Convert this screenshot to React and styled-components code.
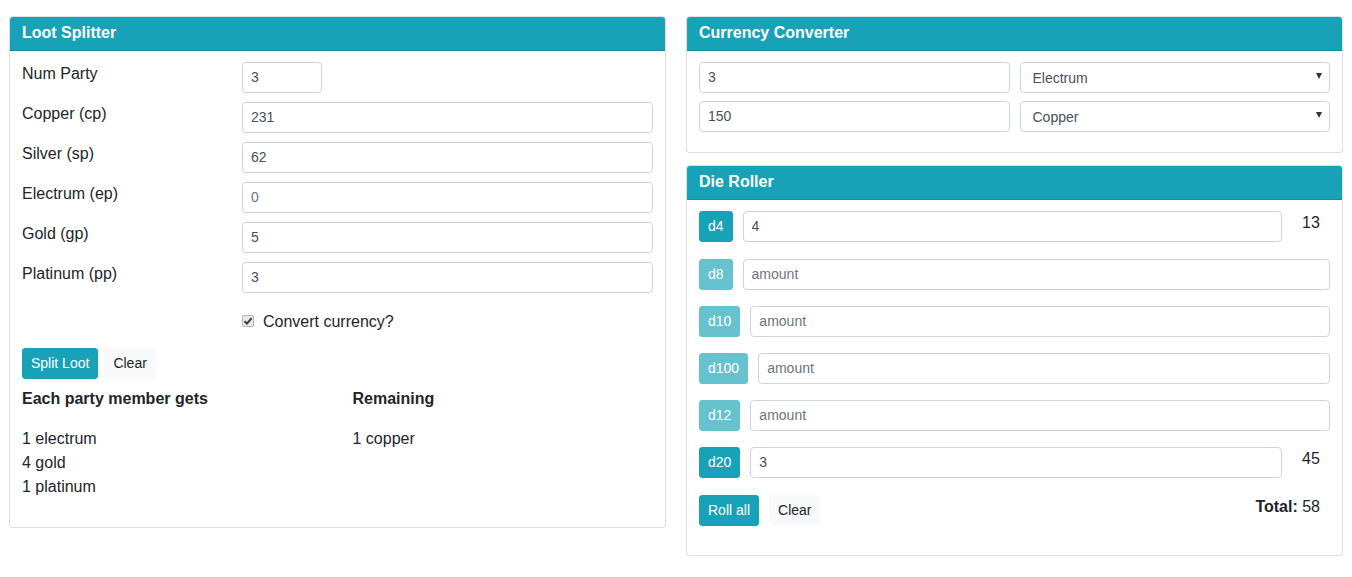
import React from "react";
import styled, { createGlobalStyle, css } from "styled-components";

const GlobalStyle = createGlobalStyle`
  * {
    box-sizing: border-box;
  }
  body {
    margin: 0;
    background: #fff;
    font-family: "Liberation Sans", Arial, Helvetica, sans-serif;
    font-size: 16px;
    line-height: 24px;
    color: #212529;
  }
`;

const dice = [
  { name: "d4", value: "4", result: "13", active: true },
  { name: "d8", value: "" },
  { name: "d10", value: "" },
  { name: "d100", value: "" },
  { name: "d12", value: "" },
  { name: "d20", value: "3", result: "45", active: true },
];

const lootFields = [
  { label: "Num Party", value: "3", narrow: true },
  { label: "Copper (cp)", value: "231" },
  { label: "Silver (sp)", value: "62" },
  { label: "Electrum (ep)", placeholder: "0" },
  { label: "Gold (gp)", value: "5" },
  { label: "Platinum (pp)", value: "3" },
];

const coins = ["Copper", "Silver", "Electrum", "Gold", "Platinum"];

const App = () => {
  return (
    <Page>
      <GlobalStyle />
      <Column>
        <Card>
          <CardHeader>Loot Splitter</CardHeader>
          <CardBody $bottom={12}>
            {lootFields.map((f) => (
              <FormRow key={f.label}>
                <FieldLabel>{f.label}</FieldLabel>
                <Input
                  $narrow={f.narrow}
                  defaultValue={f.value}
                  placeholder={f.placeholder}
                />
              </FormRow>
            ))}
            <CheckRow>
              <span />
              <CheckLabel>
                <CheckBox>
                  <svg width="10" height="10" viewBox="0 0 10 10">
                    <path
                      d="M1.5 5.2 L4 7.6 L8.6 2.2"
                      fill="none"
                      stroke="#3a3a3a"
                      strokeWidth="2"
                    />
                  </svg>
                </CheckBox>
                Convert currency?
              </CheckLabel>
            </CheckRow>
            <ButtonRow $gap={6} $top={14}>
              <Button $variant="info">Split Loot</Button>
              <Button $variant="light">Clear</Button>
            </ButtonRow>
            <Results>
              <div>
                <ResultTitle>Each party member gets</ResultTitle>
                <ResultList>
                  <li>1 electrum</li>
                  <li>4 gold</li>
                  <li>1 platinum</li>
                </ResultList>
              </div>
              <div>
                <ResultTitle>Remaining</ResultTitle>
                <ResultList>
                  <li>1 copper</li>
                </ResultList>
              </div>
            </Results>
          </CardBody>
        </Card>
      </Column>

      <Column>
        <Card>
          <CardHeader>Currency Converter</CardHeader>
          <CardBody $bottom={12}>
            <ConvertRow>
              <Input defaultValue="3" />
              <SelectWrap>
                <Select defaultValue="Electrum">
                  {coins.map((c) => (
                    <option key={c}>{c}</option>
                  ))}
                </Select>
              </SelectWrap>
            </ConvertRow>
            <ConvertRow>
              <Input defaultValue="150" />
              <SelectWrap>
                <Select defaultValue="Copper">
                  {coins.map((c) => (
                    <option key={c}>{c}</option>
                  ))}
                </Select>
              </SelectWrap>
            </ConvertRow>
          </CardBody>
        </Card>

        <Card>
          <CardHeader>Die Roller</CardHeader>
          <CardBody $bottom={13}>
            {dice.map((d) => (
              <DieRow key={d.name} $hasResult={!!d.result}>
                <Button $variant="info" $faded={!d.active}>
                  {d.name}
                </Button>
                <Input defaultValue={d.value} placeholder="amount" />
                {d.result && <DieResult>{d.result}</DieResult>}
              </DieRow>
            ))}
            <RollFooter>
              <ButtonRow $gap={10}>
                <Button $variant="info">Roll all</Button>
                <Button $variant="light">Clear</Button>
              </ButtonRow>
              <Total>
                <strong>Total:</strong> 58
              </Total>
            </RollFooter>
          </CardBody>
        </Card>
      </Column>
    </Page>
  );
};

const Page = styled.div`
  display: grid;
  grid-template-columns: 1fr 1fr;
  column-gap: 20px;
  padding: 16px 9px;
  align-items: start;
`;

const Column = styled.div`
  display: flex;
  flex-direction: column;
  gap: 12px;
`;

const Card = styled.section`
  border: 1px solid rgba(0, 0, 0, 0.125);
  border-radius: 4px;
  background: #fff;
  overflow: hidden;
`;

const CardHeader = styled.h3`
  margin: 0;
  height: 34px;
  padding: 0 12px;
  line-height: 31px;
  font-size: 16px;
  font-weight: bold;
  color: #fff;
  background: #17a2b8;
  border-bottom: 1px solid rgba(0, 0, 0, 0.125);
`;

const CardBody = styled.div`
  padding: 11px 12px ${(p) => p.$bottom}px;
`;

const FormRow = styled.div`
  display: grid;
  grid-template-columns: 220px 1fr;
  align-items: start;
  margin-bottom: 9px;
`;

const FieldLabel = styled.label`
  line-height: 24px;
`;

const Input = styled.input`
  display: block;
  width: ${(p) => (p.$narrow ? "80px" : "100%")};
  min-width: 0;
  height: 31px;
  padding: 3px 8px 5px;
  font-family: inherit;
  font-size: 14px;
  line-height: 21px;
  color: #495057;
  background: #fff;
  border: 1px solid #ced4da;
  border-radius: 4px;
  outline: none;

  &::placeholder {
    color: #6c757d;
    opacity: 1;
  }
`;

const CheckRow = styled.div`
  display: grid;
  grid-template-columns: 220px 1fr;
  margin-top: 17px;
`;

const CheckLabel = styled.label`
  display: flex;
  align-items: center;
  gap: 9px;
  line-height: 24px;
`;

const CheckBox = styled.span`
  display: inline-flex;
  align-items: center;
  justify-content: center;
  width: 12px;
  height: 12px;
  margin-top: -2px;
  border: 1px solid #b5b5b5;
  border-radius: 2px;
  background: #e8e8e8;
`;

const ButtonRow = styled.div`
  display: flex;
  gap: ${(p) => p.$gap}px;
  margin-top: ${(p) => p.$top || 0}px;
`;

const Button = styled.button`
  height: 31px;
  padding: 4px 8px;
  font-family: inherit;
  font-size: 14px;
  line-height: 21px;
  border: 1px solid transparent;
  border-radius: 3px;
  cursor: pointer;
  flex-shrink: 0;

  ${(p) =>
    p.$variant === "info"
      ? css`
          background: #17a2b8;
          border-color: #17a2b8;
          color: #fff;
        `
      : css`
          background: #f8f9fa;
          border-color: #f8f9fa;
          color: #212529;
        `}

  ${(p) =>
    p.$faded &&
    css`
      opacity: 0.65;
    `}
`;

const Results = styled.div`
  display: grid;
  grid-template-columns: 1fr 1fr;
  column-gap: 30px;
  margin-top: 8px;
`;

const ResultTitle = styled.h4`
  margin: 0 0 16px;
  font-size: 16px;
  line-height: 24px;
  font-weight: bold;
`;

const ResultList = styled.ul`
  list-style: none;
  margin: 0 0 16px;
  padding: 0;
  line-height: 24px;
`;

const ConvertRow = styled.div`
  display: grid;
  grid-template-columns: 1fr 1fr;
  column-gap: 10px;
  margin-bottom: 8px;
`;

const SelectWrap = styled.div`
  position: relative;

  &::after {
    content: "";
    position: absolute;
    right: 8px;
    top: 11px;
    border-left: 3.5px solid transparent;
    border-right: 3.5px solid transparent;
    border-top: 6px solid #333;
    pointer-events: none;
  }
`;

const Select = styled.select`
  display: block;
  width: 100%;
  height: 31px;
  padding: 4px 12px;
  font-family: inherit;
  font-size: 14px;
  color: #495057;
  background: #fff;
  border: 1px solid #ced4da;
  border-radius: 4px;
  appearance: none;
  outline: none;
`;

const DieRow = styled.div`
  display: flex;
  align-items: flex-start;
  gap: 10px;
  min-height: ${(p) => (p.$hasResult ? "32px" : "31px")};
  margin-bottom: 16px;
`;

const DieResult = styled.span`
  flex: 0 0 38px;
  text-align: center;
  line-height: 24px;
  color: #212529;
`;

const RollFooter = styled.div`
  display: flex;
  justify-content: space-between;
  align-items: flex-start;
  margin-bottom: 16px;
`;

const Total = styled.div`
  line-height: 24px;
  padding-right: 10px;
`;

export default App;
